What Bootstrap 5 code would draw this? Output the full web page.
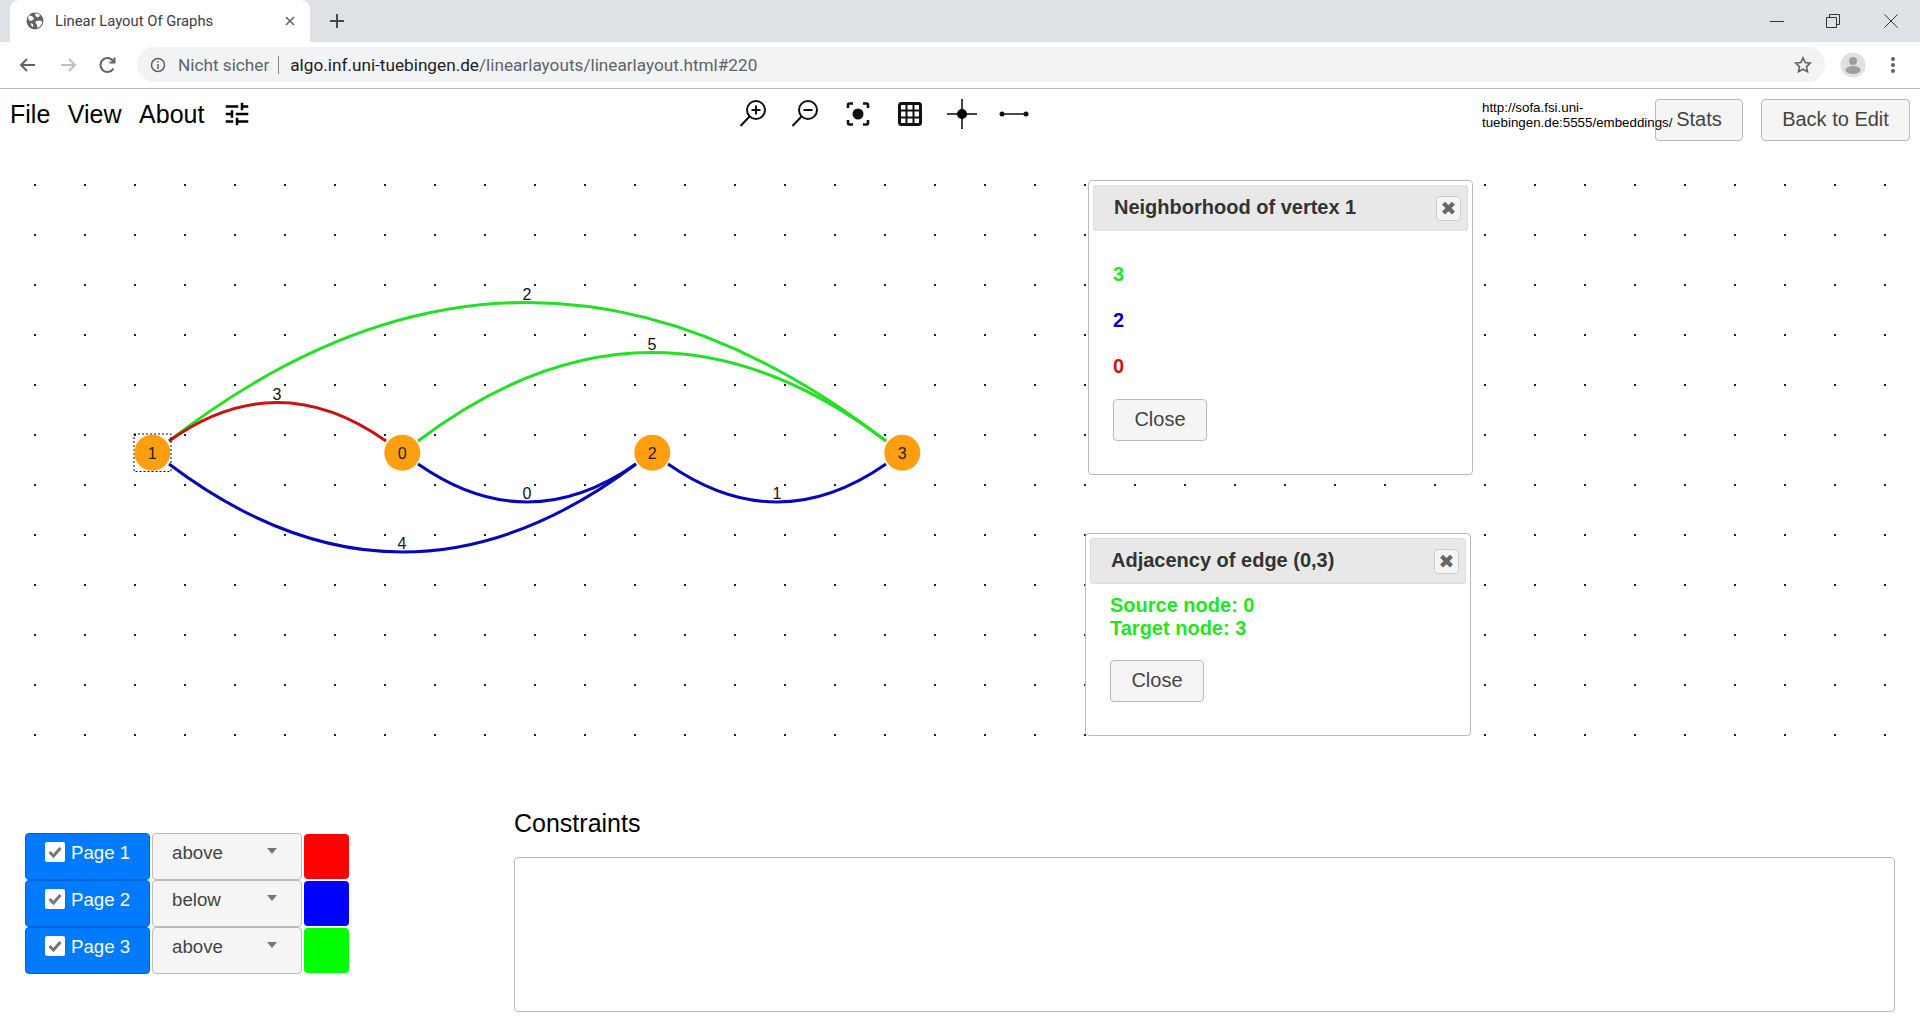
<!DOCTYPE html>
<html lang="de">
<head>
  <meta charset="UTF-8" />
  <meta name="viewport" content="width=device-width, initial-scale=1.0" />
  <title>Linear Layout Of Graphs</title>
  <link href="https://cdn.jsdelivr.net/npm/bootstrap@5.3.2/dist/css/bootstrap.min.css" rel="stylesheet" />
  <style>
    html, body { height: 100%; }
    body {
      width: 1920px;
      height: 1030px;
      overflow: hidden;
      background: #fff;
      color: #000;
      font-family: "Liberation Sans", Arial, sans-serif;
    }

    /* browser chrome */
    .tab-strip { height: 42px; background: #dee1e6; padding-left: 10px; }
    .tab-shape {
      width: 300px;
      height: 42px;
      background: #fff;
      border-radius: 9px 9px 0 0;
      padding: 0 15px 0 16px;
      font: 14.8px Roboto, sans-serif;
      color: #3c4043;
    }
    .tab-title { margin-left: 11px; }
    .new-tab { margin-left: 20px; }
    .win-btns { gap: 44px; padding-right: 22px; }
    .win-min { margin-right: -2px; }
    .tool-strip {
      height: 47px;
      border-bottom: 1px solid #bbb;
      padding: 5px 19px 6px 18px;
    }
    .nav-arrows { gap: 20px; width: 119px; }
    .url-pill {
      width: 1688px;
      height: 35px;
      background: #f1f3f4;
      border-radius: 18px;
      padding: 0 13px 0 13px;
      font: 17.2px Roboto, sans-serif;
      color: #5f6368;
      white-space: nowrap;
    }
    .url-sep { width: 1px; height: 18px; background: #80868b; margin: 0 11px 0 9px; }
    .url-host { color: #202124; }
    .tool-right { gap: 24px; margin-left: 15px; }

    /* app menu bar */
    .menu-bar { height: 51px; padding: 10px 10px 0 10px; }
    .menu-left { width: 727px; gap: 17.5px; font-size: 25px; line-height: 30px; }
    .tool-icons { gap: 20.3px; }
    .stats-url {
      width: 191px;
      font-size: 13.33px;
      line-height: 15px;
      margin: 1px -18px 0 auto;
      position: relative;
      z-index: 1;
    }
    .plain-btn {
      height: 42px;
      background: #f5f5f5;
      border: 1px solid #bbb;
      border-radius: 4px;
      color: #444;
      font-size: 20px;
      line-height: 1;
      padding: 0 0 2px 0;
    }
    .plain-btn:hover { background: #eee; color: #333; border-color: #aaa; }
    .btn-stats { width: 88px; margin-right: 18px; }
    .btn-back { width: 149px; }

    /* free canvas with graph and floating panels */
    .graph-area { position: relative; height: 660px; }
    .graph-area svg { display: block; }
    .edge { fill: none; stroke-width: 3; }
    .edge-green { stroke: #22e022; }
    .edge-red { stroke: #cc1111; }
    .edge-blue { stroke: #0808b8; }
    .edge-label { font: 16px "Liberation Sans", Arial, sans-serif; text-anchor: middle; fill: #111; }
    .node-label { font: 16px "Liberation Sans", Arial, sans-serif; text-anchor: middle; fill: #222; }

    .float-panel {
      position: absolute;
      background: #fff;
      border: 1px solid #bbb;
      border-radius: 4px;
      padding: 4px;
    }
    .panel-one { left: 1088px; top: 40px; width: 385px; height: 295px; }
    .panel-two { left: 1085px; top: 393px; width: 386px; height: 203px; }
    .panel-head {
      height: 46px;
      background: #e8e8e8;
      border: 1px solid #ddd;
      border-radius: 3px;
      padding: 0 6px 2px 20px;
      font-size: 20px;
      font-weight: 700;
      color: #333;
    }
    .panel-x {
      width: 25px;
      height: 25px;
      background: #f5f5f5;
      border: 1px solid #ccc;
      border-radius: 4px;
      color: #666;
      font: 19px "DejaVu Sans", sans-serif;
      padding: 0;
      margin-top: 2px;
    }
    .panel-text { font-size: 20px; font-weight: 700; line-height: 23px; }
    .neigh-list { padding: 32px 0 0 20px; gap: 23px; }
    .edge-info { padding: 10px 0 0 20px; }
    .txt-green { color: #22e622; }
    .txt-blue { color: #0000b8; }
    .txt-red { color: #cc1111; }
    .btn-close-panel { width: 94px; }
    .neigh-list .btn-close-panel { margin-top: -2px; }
    .edge-info .btn-close-panel { margin-top: 20px; }

    /* bottom row */
    .bottom-row { padding: 8px 25px 0 25px; }
    .page-col { width: 489px; padding-top: 25px; }
    .page-row { height: 47px; gap: 2px; }
    .page-btn {
      width: 125px;
      height: 47px;
      background: #007bff;
      border: 1px solid #0062cc;
      border-radius: 4px;
      color: #fff;
      font-size: 18.7px;
      padding: 8px 0 0 19px;
      line-height: 22px;
    }
    .page-check {
      width: 20px;
      height: 20px;
      background: #fff;
      border-radius: 2px;
      margin-right: 6px;
    }
    .page-select {
      width: 150px;
      height: 47px;
      background: #f5f5f5;
      border: 1px solid #bbb;
      border-radius: 4px;
      color: #444;
      font-size: 18.7px;
      line-height: 22px;
      padding: 8px 0 0 19px;
    }
    .select-caret {
      width: 0;
      height: 0;
      border-left: 5px solid transparent;
      border-right: 5px solid transparent;
      border-top: 6px solid #777;
      position: absolute;
      left: 114px;
      top: 14px;
    }
    .page-swatch { width: 45px; height: 45.5px; border-radius: 4px; margin-top: .5px; }
    .constraints-col { width: 1381px; }
    .constraints-title { font-size: 25px; line-height: 30px; margin: 0 0 19px 0; font-weight: 400; }
    .constraints-box {
      height: 155px;
      border: 1px solid #bbb;
      border-radius: 4px;
      resize: none;
    }
  </style>
</head>
<body>

  <div class="tab-strip d-flex align-items-center">
    <div class="tab-shape d-flex align-items-center">
      <svg width="18" height="18" viewBox="0 0 18 18">
        <circle cx="9" cy="9" r="8.5" fill="#5f6368" />
        <path d="M3 3.5l3 .5 2 2.5-1.5 2-2.5.5-2-2.5zM9 1.5l4 .5 1 2-2.5 1.5-2-1.5zM10 9l4.5-.5 2 2-2.5 4-2.5 1.5-.5-3-1.5-2zM4.5 11l2.5 1 .5 3-2-1z" fill="#fff" />
      </svg>
      <span class="tab-title flex-grow-1">Linear Layout Of Graphs</span>
      <svg width="10" height="10" viewBox="0 0 10 10"><path d="M1 1l8 8M9 1l-8 8" stroke="#5f6368" stroke-width="1.6" /></svg>
    </div>
    <svg class="new-tab" width="14" height="14" viewBox="0 0 14 14"><path d="M7 0v14M0 7h14" stroke="#45494e" stroke-width="2" /></svg>
    <div class="win-btns d-flex align-items-center ms-auto">
      <svg class="win-min" width="14" height="14" viewBox="0 0 14 14"><path d="M0 7.5h14" stroke="#333" stroke-width="1" /></svg>
      <svg width="14" height="14" viewBox="0 0 14 14" fill="none" stroke="#333"><path d="M.5 3.5h10v10H.5zM3.5 3.5v-3h10v10h-3" /></svg>
      <svg width="14" height="14" viewBox="0 0 14 14"><path d="M.5.5l13 13M13.5.5l-13 13" stroke="#333" stroke-width="1" /></svg>
    </div>
  </div>

  <div class="tool-strip d-flex align-items-center">
    <div class="nav-arrows d-flex align-items-center">
      <svg width="20" height="16" viewBox="0 0 20 16" fill="none" stroke="#5f6368" stroke-width="2"><path d="M17 8H3M9 2L3 8l6 6" /></svg>
      <svg width="20" height="16" viewBox="0 0 20 16" fill="none" stroke="#bdc1c6" stroke-width="2"><path d="M3 8h14M11 2l6 6-6 6" /></svg>
      <svg width="20" height="18" viewBox="0 0 20 18" fill="none" stroke="#5f6368" stroke-width="2"><path d="M15.5 12.5a7 7 0 1 1 .3-6.5" /><path d="M16.5 1.5v5h-5" /></svg>
    </div>
    <div class="url-pill d-flex align-items-center">
      <svg class="me-2" width="16" height="16" viewBox="0 0 16 16" fill="none" stroke="#5f6368" stroke-width="1.5"><circle cx="8" cy="8" r="6.5" /><path d="M8 7v5M8 4v1.6" /></svg>
      <span class="ms-1">Nicht sicher</span>
      <span class="url-sep"></span>
      <span><span class="url-host">algo.inf.uni-tuebingen.de</span>/linearlayouts/linearlayout.html#220</span>
      <svg class="ms-auto" width="18" height="18" viewBox="0 0 18 18" fill="none" stroke="#5f6368" stroke-width="1.6"><path d="M9 1.8l2.2 4.7 5.1.6-3.8 3.5 1 5.1L9 13.2l-4.5 2.5 1-5.1-3.8-3.5 5.1-.6z" /></svg>
    </div>
    <div class="tool-right d-flex align-items-center">
      <svg width="26" height="26" viewBox="0 0 26 26">
        <circle cx="13" cy="13" r="12.5" fill="#e0e0e0" />
        <circle cx="13" cy="9" r="4" fill="#9e9e9e" />
        <ellipse cx="13" cy="18" rx="7.5" ry="4" fill="#9e9e9e" />
      </svg>
      <svg width="6" height="18" viewBox="0 0 6 18" fill="#5f6368"><circle cx="3" cy="3" r="2" /><circle cx="3" cy="9" r="2" /><circle cx="3" cy="15" r="2" /></svg>
    </div>
  </div>

  <div class="menu-bar d-flex align-items-start">
    <div class="menu-left d-flex align-items-center">
      <span>File</span>
      <span>View</span>
      <span>About</span>
      <svg width="30" height="30" viewBox="0 0 24 24"><path d="M3 17v2h6v-2H3zM3 5v2h10V5H3zm10 16v-2h8v-2h-8v-2h-2v6h2zM7 9v2H3v2h4v2h2V9H7zm14 4v-2H11v2h10zm-6-4h2V7h4V5h-4V3h-2v6z" /></svg>
    </div>
    <div class="tool-icons d-flex align-items-center">
      <svg width="32" height="30" viewBox="0 0 32 30" fill="none" stroke="#111" stroke-width="2">
        <circle cx="19" cy="11" r="9" /><path d="M19 6.5v9M14.5 11h9" /><path d="M12.500 17.500L3.500 27" />
      </svg>
      <svg width="32" height="30" viewBox="0 0 32 30" fill="none" stroke="#111" stroke-width="2">
        <circle cx="19" cy="11" r="9" /><path d="M14.5 11h9" /><path d="M12.500 17.500L3.500 27" />
      </svg>
      <svg width="32" height="30" viewBox="0 0 32 30" fill="none" stroke="#111" stroke-width="2.6">
        <circle cx="16" cy="15" r="5.5" fill="#111" stroke="none" />
        <path d="M6 9V6a1.5 1.5 0 0 1 1.5-1.5H11M21 4.5h3.5A1.5 1.5 0 0 1 26 6v3M26 21v3a1.5 1.5 0 0 1-1.5 1.5H21M11 25.500H7.500A1.500 1.500 0 0 1 6 24v-3" />
      </svg>
      <svg width="32" height="30" viewBox="0 0 32 30" fill="none" stroke="#111">
        <rect x="5.500" y="4.500" width="21" height="21" rx="2" stroke-width="3" />
        <path d="M12.500 4.500v21M19.500 4.500v21M5.500 11.500h21M5.500 18.500h21" stroke-width="2" />
      </svg>
      <svg width="32" height="30" viewBox="0 0 32 30">
        <path d="M1 15h30M16 0v30" stroke="#444" stroke-width="2" />
        <circle cx="16" cy="15" r="5" fill="#000" />
      </svg>
      <svg width="32" height="30" viewBox="0 0 32 30">
        <path d="M4 15h24" stroke="#111" stroke-width="1.500" />
        <circle cx="4" cy="15" r="2.500" fill="#111" /><circle cx="28" cy="15" r="2.500" fill="#111" />
      </svg>
    </div>
    <div class="stats-url">http://sofa.fsi.uni-tuebingen.de:5555/embeddings/</div>
    <button type="button" class="btn plain-btn btn-stats">Stats</button>
    <button type="button" class="btn plain-btn btn-back">Back to Edit</button>
  </div>

  <div class="graph-area">
    <svg width="1920" height="660" viewBox="0 140 1920 660">
      <defs>
        <pattern id="gridDots" x="34" y="184" width="50" height="50" patternUnits="userSpaceOnUse">
          <rect width="2" height="2" fill="#222" />
        </pattern>
      </defs>
      <rect x="34" y="184" width="1852" height="552" fill="url(#gridDots)" />

      <path class="edge edge-green" d="M169 441Q527 164 886 441" />
      <path class="edge edge-green" d="M418 441Q652 264 886 441" />
      <path class="edge edge-red" d="M169 441Q277 364 386 441" />
      <path class="edge edge-blue" d="M418 464Q527 540 636 464" />
      <path class="edge edge-blue" d="M668 464Q777 540 886 464" />
      <path class="edge edge-blue" d="M169 464Q402 640 636 464" />

      <text class="edge-label" x="527" y="300">2</text>
      <text class="edge-label" x="652" y="350">5</text>
      <text class="edge-label" x="277" y="400">3</text>
      <text class="edge-label" x="527" y="499">0</text>
      <text class="edge-label" x="777" y="499">1</text>
      <text class="edge-label" x="402" y="549">4</text>

      <rect x="134" y="434" width="37" height="37.500" fill="none" stroke="#111" stroke-width="1" stroke-dasharray="2 2" />
      <circle cx="152.300" cy="452.700" r="18" fill="#ff9f0f" />
      <circle cx="402.300" cy="452.700" r="18" fill="#ff9f0f" />
      <circle cx="652.300" cy="452.700" r="18" fill="#ff9f0f" />
      <circle cx="902.300" cy="452.700" r="18" fill="#ff9f0f" />
      <text class="node-label" x="152.300" y="458.500">1</text>
      <text class="node-label" x="402.300" y="458.500">0</text>
      <text class="node-label" x="652.300" y="458.500">2</text>
      <text class="node-label" x="902.300" y="458.500">3</text>
    </svg>

    <div class="float-panel panel-one">
      <div class="panel-head d-flex align-items-center justify-content-between">
        <span>Neighborhood of vertex 1</span>
        <button type="button" class="btn panel-x d-flex align-items-center justify-content-center">✖</button>
      </div>
      <div class="neigh-list d-flex flex-column align-items-start">
        <div class="panel-text txt-green">3</div>
        <div class="panel-text txt-blue">2</div>
        <div class="panel-text txt-red">0</div>
        <button type="button" class="btn plain-btn btn-close-panel">Close</button>
      </div>
    </div>

    <div class="float-panel panel-two">
      <div class="panel-head d-flex align-items-center justify-content-between">
        <span>Adjacency of edge (0,3)</span>
        <button type="button" class="btn panel-x d-flex align-items-center justify-content-center">✖</button>
      </div>
      <div class="edge-info d-flex flex-column align-items-start">
        <div class="panel-text txt-green">Source node: 0<br />Target node: 3</div>
        <button type="button" class="btn plain-btn btn-close-panel">Close</button>
      </div>
    </div>
  </div>

  <div class="bottom-row d-flex">
    <div class="page-col">
      <div class="page-row d-flex">
        <div class="page-btn d-flex align-items-start">
          <span class="page-check d-flex align-items-center justify-content-center">
            <svg width="14" height="12" viewBox="0 0 14 12" fill="none" stroke="#777" stroke-width="3"><path d="M1.500 6l4 4 7-8" /></svg>
          </span>Page 1
        </div>
        <div class="page-select position-relative">above<span class="select-caret"></span></div>
        <div class="page-swatch" style="background:#ff0000"></div>
      </div>
      <div class="page-row d-flex">
        <div class="page-btn d-flex align-items-start">
          <span class="page-check d-flex align-items-center justify-content-center">
            <svg width="14" height="12" viewBox="0 0 14 12" fill="none" stroke="#777" stroke-width="3"><path d="M1.500 6l4 4 7-8" /></svg>
          </span>Page 2
        </div>
        <div class="page-select position-relative">below<span class="select-caret"></span></div>
        <div class="page-swatch" style="background:#0000ff"></div>
      </div>
      <div class="page-row d-flex">
        <div class="page-btn d-flex align-items-start">
          <span class="page-check d-flex align-items-center justify-content-center">
            <svg width="14" height="12" viewBox="0 0 14 12" fill="none" stroke="#777" stroke-width="3"><path d="M1.500 6l4 4 7-8" /></svg>
          </span>Page 3
        </div>
        <div class="page-select position-relative">above<span class="select-caret"></span></div>
        <div class="page-swatch" style="background:#00ff00"></div>
      </div>
    </div>
    <div class="constraints-col">
      <h4 class="constraints-title">Constraints</h4>
      <textarea class="form-control constraints-box"></textarea>
    </div>
  </div>

  <script src="https://cdn.jsdelivr.net/npm/bootstrap@5.3.2/dist/js/bootstrap.bundle.min.js"></script>
</body>
</html>
